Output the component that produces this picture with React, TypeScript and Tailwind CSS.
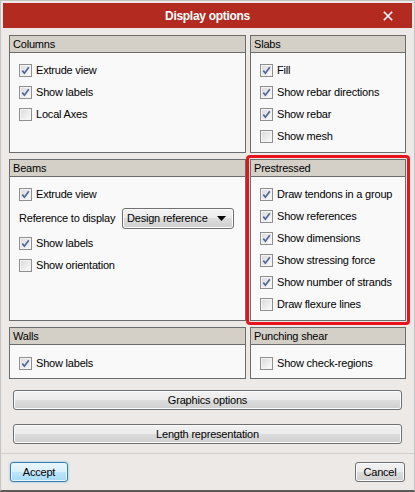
import React from "react";

const FONT = { fontFamily: '"Liberation Sans", Arial, sans-serif' };

function Check({ checked, label }: { checked?: boolean; label: string }) {
  return (
    <div className="flex items-center h-[22px]">
      <span className="w-[13px] h-[13px] border border-[#8f8f8f] bg-linear-to-br from-[#d8d8d8] to-[#fdfdfd] shadow-[inset_0_0_0_1px_#f4f4f4] flex items-center justify-center shrink-0">
        {checked && (
          <svg width="9" height="9" viewBox="0 0 9 9">
            <path d="M1.3 4.6 L3.4 7.2 L7.8 1.2" fill="none" stroke="#51679a" strokeWidth="1.7" />
          </svg>
        )}
      </span>
      <span className="ml-[4px] text-[11px] tracking-[-0.2px] text-black whitespace-nowrap">{label}</span>
    </div>
  );
}

function Panel({ title, children, pt = "pt-[6px]" }: { title: string; children?: React.ReactNode; pt?: string }) {
  return (
    <div className="h-full border border-[#6c6c6c] bg-[#f9f9f9] flex flex-col">
      <div className="h-[17px] bg-[#d4d0c8] border-b border-[#6c6c6c] pl-[3px] text-[11px] tracking-[-0.2px] leading-[17px] text-black">
        {title}
      </div>
      <div className={`flex flex-col pl-[9px] ${pt}`}>{children}</div>
    </div>
  );
}

const btn =
  "border border-[#707070] rounded-[3px] bg-[linear-gradient(#f2f2f2,#ebebeb_50%,#dddddd_50%,#cfcfcf)] shadow-[inset_0_0_0_1px_#fbfbfb] text-[11px] tracking-[-0.2px] text-black flex items-center justify-center";

export default function App() {
  return (
    <div
      className="w-[415px] h-[492px] bg-[#ece9e6] border border-[#c4c4c4] border-b-2 border-b-[#5a5a5a] flex flex-col"
      style={FONT}
    >
      {/* Title bar */}
      <div className="mx-[2px] mt-[2px] h-[25px] bg-[#b22a20] relative flex items-center justify-center shrink-0">
        <span className="text-white font-bold text-[12px] tracking-[-0.3px]">Display options</span>
        <svg className="absolute right-[19px] top-[8px]" width="10" height="10" viewBox="0 0 10 10">
          <path d="M0.8 0.8 L9.2 9.2 M9.2 0.8 L0.8 9.2" stroke="#fff" strokeWidth="1.6" />
        </svg>
      </div>

      {/* Body */}
      <div className="px-[8px] pt-[7px]">
        <div className="grid grid-cols-[237px_156px] grid-rows-[118px_162px_52px] gap-x-[4px] gap-y-[6px]">
          <Panel title="Columns">
            <Check checked label="Extrude view" />
            <Check checked label="Show labels" />
            <Check label="Local Axes" />
          </Panel>
          <Panel title="Slabs">
            <Check checked label="Fill" />
            <Check checked label="Show rebar directions" />
            <Check checked label="Show rebar" />
            <Check label="Show mesh" />
          </Panel>
          <Panel title="Beams">
            <Check checked label="Extrude view" />
            <div className="flex items-center h-[27px]">
              <span className="text-[11px] tracking-[-0.2px] text-black w-[103px]">Reference to display</span>
              <div className={`${btn} !justify-between w-[112px] h-[21px] pl-[4px] pr-[7px]`}>
                <span>Design reference</span>
                <svg width="9" height="5" viewBox="0 0 9 5">
                  <path d="M0 0 H9 L4.5 5 Z" fill="#000" />
                </svg>
              </div>
            </div>
            <Check checked label="Show labels" />
            <Check label="Show orientation" />
          </Panel>
          <div className="relative h-full">
            <Panel title="Prestressed">
              <Check checked label="Draw tendons in a group" />
              <Check checked label="Show references" />
              <Check checked label="Show dimensions" />
              <Check checked label="Show stressing force" />
              <Check checked label="Show number of strands" />
              <Check label="Draw flexure lines" />
            </Panel>
            <div className="absolute -inset-[4px] border-[3px] border-[#e8121b] rounded-[4px] pointer-events-none" />
          </div>
          <Panel title="Walls" pt="pt-[7px]">
            <Check checked label="Show labels" />
          </Panel>
          <Panel title="Punching shear" pt="pt-[7px]">
            <Check label="Show check-regions" />
          </Panel>
        </div>

        <div className={`${btn} mx-[4px] mt-[11px] h-[20px]`}>Graphics options</div>
        <div className={`${btn} mx-[4px] mt-[14px] h-[20px]`}>Length representation</div>
      </div>

      <div className="mt-[9px] h-px bg-[#d3d0cb] shrink-0" />

      {/* Footer */}
      <div className="flex justify-between pl-[9px] pr-[9px] pt-[8px]">
        <div className="w-[58px] h-[20px] border border-[#3c7fb1] rounded-[3px] bg-[linear-gradient(#eaf6fd,#d9f0fc_50%,#bee6fd_50%,#a7d9f5)] shadow-[inset_0_0_0_1px_#e6f5fd,0_0_2px_#5ab8ef] text-[11px] tracking-[-0.2px] text-black flex items-center justify-center">
          Accept
        </div>
        <div className={`${btn} w-[50px] h-[20px]`}>Cancel</div>
      </div>
    </div>
  );
}
